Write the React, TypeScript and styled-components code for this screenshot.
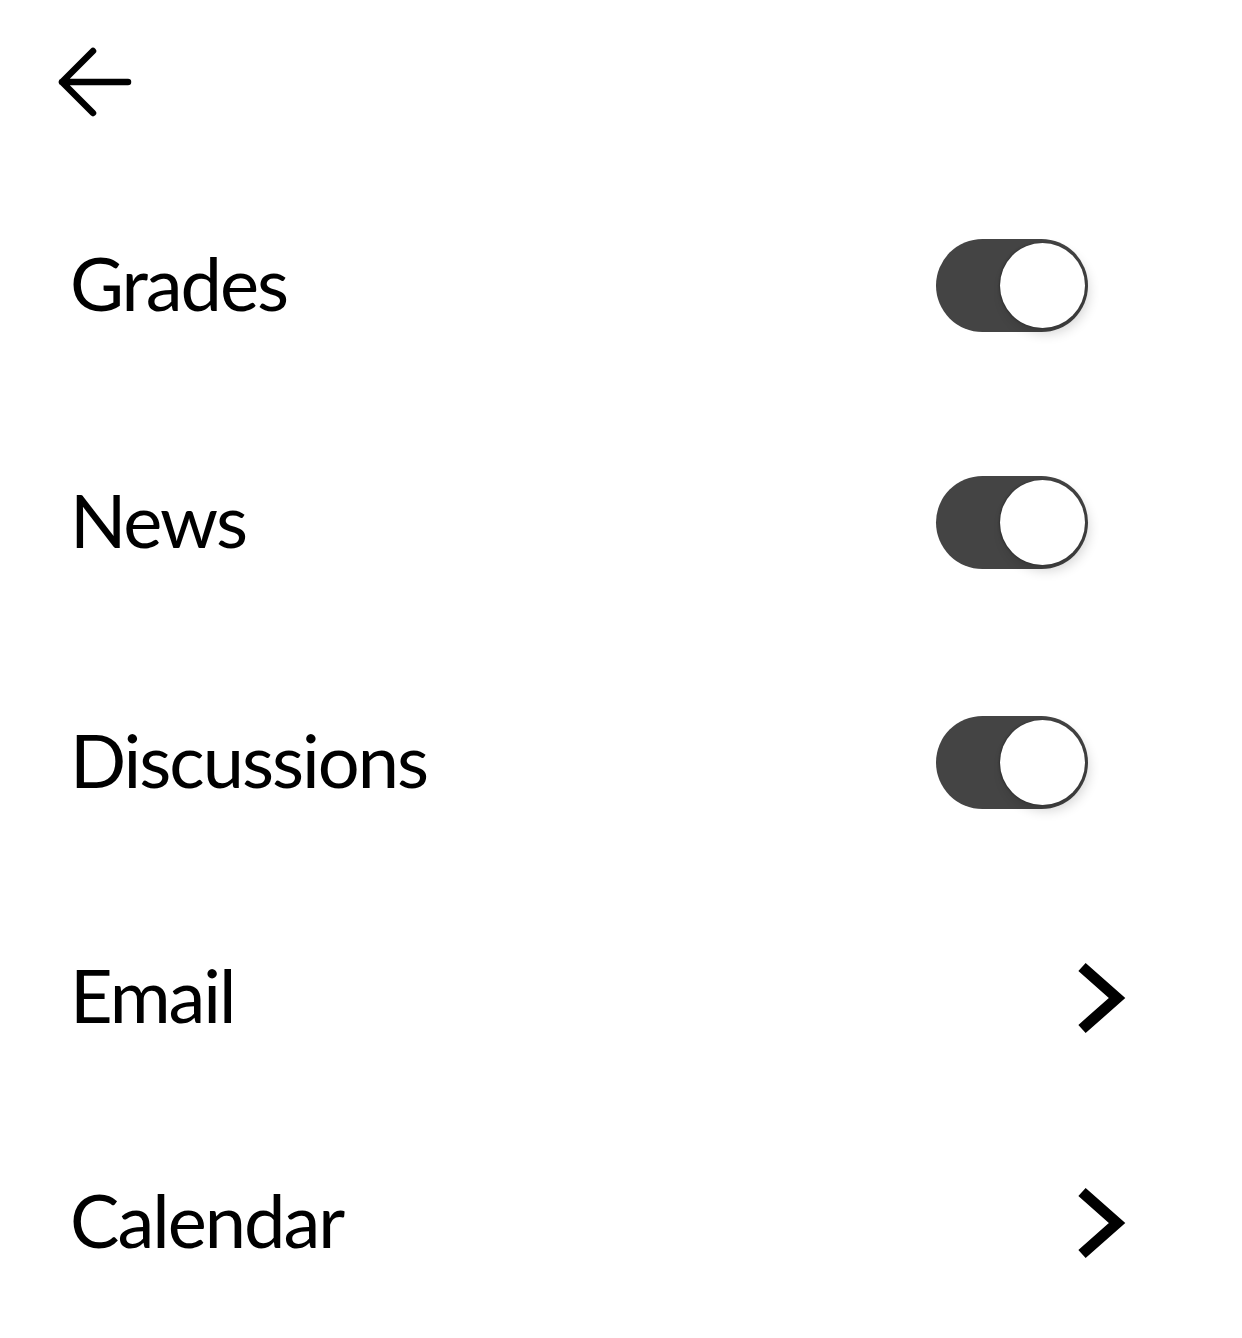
import React, { useState } from 'react'
import styled, { createGlobalStyle } from 'styled-components'

const GlobalStyle = createGlobalStyle`
  html, body {
    margin: 0;
    padding: 0;
    background: #ffffff;
  }
  body {
    font-family: Lato, "Noto Sans", "Liberation Sans", sans-serif;
    color: #000000;
  }
`

type Item = {
  label: string
  kind: 'toggle' | 'link'
  space: number
}

const items: Item[] = [
  { label: 'Grades', kind: 'toggle', space: 0 },
  { label: 'News', kind: 'toggle', space: 144 },
  { label: 'Discussions', kind: 'toggle', space: 147 },
  { label: 'Email', kind: 'link', space: 142 },
  { label: 'Calendar', kind: 'link', space: 132 },
]

const BackArrow = () => (
  <svg width="76" height="70" viewBox="0 0 76 70" fill="none">
    <path
      d="M37 4 L6 35 L37 66 M6 35 L72 35"
      stroke="#000"
      strokeWidth="6.5"
      strokeLinecap="round"
      strokeLinejoin="round"
    />
  </svg>
)

const Chevron = () => (
  <svg width="50" height="72" viewBox="0 0 50 72" fill="none">
    <path d="M6 5 L41 36 L6 67" stroke="#000" strokeWidth="11" strokeLinejoin="miter" />
  </svg>
)

const App = () => {
  const [state, setState] = useState<Record<string, boolean>>({
    Grades: true,
    News: true,
    Discussions: true,
  })

  return (
    <>
      <GlobalStyle />
      <Page>
        <Header>
          <BackButton aria-label="Back">
            <BackArrow />
          </BackButton>
        </Header>
        <List>
          {items.map((item) => (
            <Row key={item.label} $space={item.space}>
              <Label>{item.label}</Label>
              {item.kind === 'toggle' ? (
                <Switch
                  $on={state[item.label]}
                  onClick={() => setState({ ...state, [item.label]: !state[item.label] })}
                >
                  <Thumb $on={state[item.label]} />
                </Switch>
              ) : (
                <LinkIcon>
                  <Chevron />
                </LinkIcon>
              )}
            </Row>
          ))}
        </List>
      </Page>
    </>
  )
}

export default App

const Page = styled.div`
  width: 1242px;
  min-height: 1338px;
  display: flex;
  flex-direction: column;
`
const Header = styled.div`
  height: 166px;
  padding: 47px 0 0 56px;
  box-sizing: border-box;
`
const BackButton = styled.button`
  border: none;
  background: none;
  padding: 0;
  display: block;
  cursor: pointer;
`
const List = styled.div`
  display: flex;
  flex-direction: column;
  padding: 73px 0 0 70px;
`
const Row = styled.div<{ $space: number }>`
  height: 93px;
  margin-top: ${(p) => p.$space}px;
  display: flex;
  align-items: center;
  justify-content: space-between;
`
const Label = styled.div`
  font-size: 74px;
  line-height: 1;
  font-weight: 400;
  letter-spacing: -2px;
  color: #000;
  margin-top: -6px;
`
const Switch = styled.div<{ $on: boolean }>`
  width: 152px;
  height: 93px;
  margin-right: 154px;
  border-radius: 47px;
  background: ${(p) => (p.$on ? '#444444' : '#cfcfcf')};
  position: relative;
  cursor: pointer;
`
const Thumb = styled.div<{ $on: boolean }>`
  position: absolute;
  top: 4px;
  left: ${(p) => (p.$on ? '64px' : '4px')};
  width: 85px;
  height: 85px;
  border-radius: 50%;
  background: #ffffff;
  box-shadow: 4px 6px 12px rgba(0, 0, 0, 0.16), -1px 0 2px rgba(0, 0, 0, 0.3);
`
const LinkIcon = styled.div`
  width: 50px;
  height: 72px;
  margin-right: 116px;
  display: flex;
`
